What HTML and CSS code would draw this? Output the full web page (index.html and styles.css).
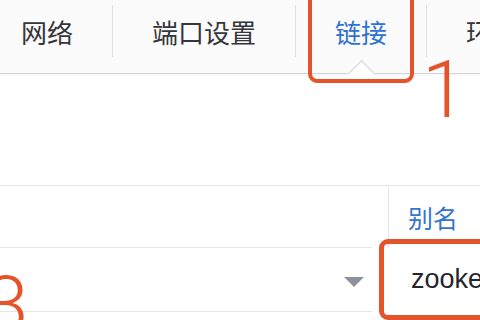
FILE: index.html
```html
<!DOCTYPE html>
<html lang="zh-CN">
<head>
<meta charset="utf-8">
<title>链接设置</title>
<link rel="stylesheet" href="styles.css">
</head>
<body>
<div class="page">
  <nav class="tabbar">
    <div class="tab">网络</div>
    <span class="sep"></span>
    <div class="tab">端口设置</div>
    <span class="sep"></span>
    <div class="tab active">链接<span class="mark mark-tab"></span></div>
    <span class="sep"></span>
    <div class="tab">环境</div>
  </nav>
  <div class="spacer"></div>
  <div class="table">
    <div class="cell head-left"></div>
    <div class="cell head-right">别名</div>
    <div class="cell select-cell">
      <div class="select"><span class="arrow"></span></div>
    </div>
    <div class="cell input-cell">zookeeper<span class="mark mark-input"></span></div>
  </div>
  <span class="annot annot-1">1</span>
  <span class="annot annot-3">3</span>
</div>
</body>
</html>
```

FILE: styles.css
```css
html, body {
  margin: 0;
  padding: 0;
  background: #ffffff;
}

.page {
  position: relative;
  width: 480px;
  height: 320px;
  overflow: hidden;
  font-family: "Noto Sans CJK SC", "Noto Sans", sans-serif;
  background: #ffffff;
}

.tabbar {
  display: flex;
  height: 73px;
  margin-left: -18px;
  background: #fbfbfc;
  border-bottom: 1px solid #d2d4d8;
  box-shadow: 0 1px 2px rgba(0, 0, 0, 0.05);
  position: relative;
}

.tab {
  position: relative;
  padding: 19px 39px 0;
  font-size: 26px;
  line-height: 26px;
  color: #35363a;
  white-space: nowrap;
}

.tab.active {
  color: #2e72d3;
}

.tab.active::after {
  content: "";
  position: absolute;
  left: 50%;
  bottom: -10px;
  width: 18px;
  height: 18px;
  margin-left: -9px;
  background: #ffffff;
  border-left: 1px solid #d2d4d8;
  border-top: 1px solid #d2d4d8;
  transform: rotate(45deg);
}

.sep {
  width: 1px;
  height: 52px;
  margin-top: 5px;
  background: #dfe0e3;
  flex: none;
}

.mark {
  position: absolute;
  box-sizing: border-box;
  border: 4px solid #e4532a;
  border-radius: 9px;
  z-index: 2;
}

.mark-tab {
  left: 12px;
  top: -12px;
  width: 106px;
  height: 95px;
}

.spacer {
  height: 111px;
  border-bottom: 1px solid #e3e5e8;
}

.table {
  display: grid;
  grid-template-columns: 388px 1fr;
  grid-template-rows: 61px 64px;
}

.head-right {
  border-left: 1px solid #e3e5e8;
  padding-left: 19px;
  font-size: 25px;
  color: #3474cc;
  display: flex;
  align-items: center;
}

.select-cell {
  padding-right: 16px;
}

.select {
  height: 63px;
  border-top: 1px solid #e3e5e8;
  border-bottom: 1px solid #e3e5e8;
  display: flex;
  justify-content: flex-end;
  align-items: center;
  padding-right: 8px;
}

.arrow {
  width: 0;
  height: 0;
  margin-top: 5px;
  border-left: 10.5px solid transparent;
  border-right: 10.5px solid transparent;
  border-top: 10px solid #8d9199;
}

.input-cell {
  position: relative;
  display: flex;
  align-items: center;
  padding-left: 23px;
  font-family: "Liberation Sans", Arial, sans-serif;
  font-size: 27px;
  color: #25262e;
  white-space: nowrap;
}

.mark-input {
  left: -9px;
  top: -8px;
  width: 130px;
  height: 81px;
  border-width: 5px;
}

.annot {
  position: absolute;
  font-family: Roboto, "Liberation Sans", sans-serif;
  font-weight: 300;
  font-size: 80px;
  line-height: 80px;
  color: #e4532a;
  z-index: 3;
}

.annot-1 {
  left: 422px;
  top: 50px;
}

.annot-3 {
  left: -16px;
  top: 265px;
}
```
